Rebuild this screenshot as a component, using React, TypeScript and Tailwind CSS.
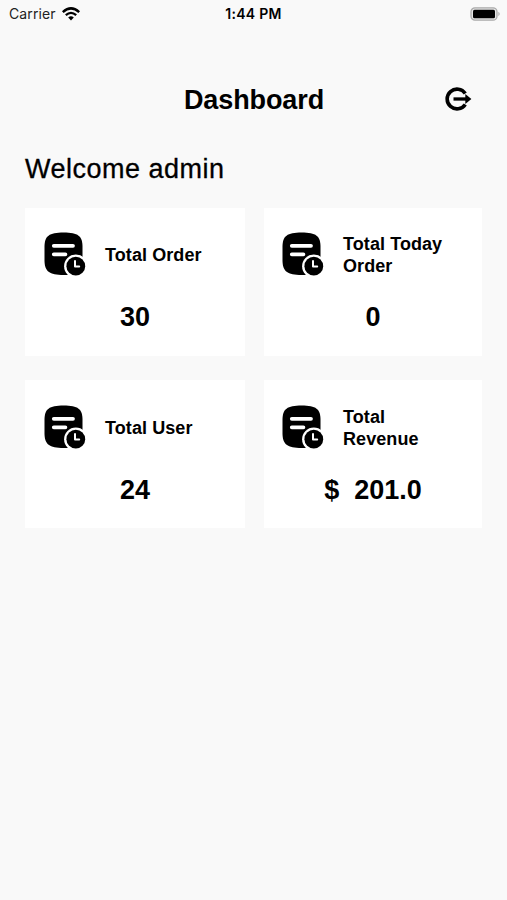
import React from "react";

function OrderIcon() {
  return (
    <svg width="42" height="44" viewBox="0 0 42 44" className="shrink-0">
      <path
        d="M0.5 15C0.5 4 5 0.5 19.6 0.5S38.5 4 38.5 15V28C38.5 39.5 34 43 19.6 43S0.5 39.5 0.5 28Z"
        fill="#000"
      />
      <path d="M9.8 13.8H29M9.8 22.3H21.4" stroke="#fff" strokeWidth="3.8" strokeLinecap="round" />
      <circle cx="31.8" cy="34.2" r="11.7" fill="#fff" />
      <circle cx="31.8" cy="34.2" r="9.4" fill="#000" />
      <path d="M31 29V34.6H35.2" fill="none" stroke="#fff" strokeWidth="2" strokeLinecap="round" strokeLinejoin="round" />
    </svg>
  );
}

function LogoutIcon() {
  return (
    <svg width="28" height="26" viewBox="0 0 28 26" fill="none">
      <path d="M21.3 7.5A9.9 9.9 0 1 0 21.3 18.5" stroke="#000" strokeWidth="3.6" />
      <path d="M9.5 13H23" stroke="#000" strokeWidth="3.3" />
      <path d="M21.3 8L27.4 13L21.3 18Z" fill="#000" />
    </svg>
  );
}

function StatusBar() {
  return (
    <div className="grid h-[27px] grid-cols-3 items-center text-[14px] text-black font-['Inter','Liberation_Sans',sans-serif]">
      <div className="flex items-center gap-[6px] pl-[9px]">
        <span className="tracking-[0.1px] text-[#222]">Carrier</span>
        <svg width="18" height="14" viewBox="0 0 18 14" fill="none" stroke="#000">
          <path d="M0.8 5.1Q9 -2.3 17.2 5.1" strokeWidth="2.5" />
          <path d="M3.8 8.2Q9 3.5 14.2 8.2" strokeWidth="2.3" />
          <path d="M6.2 10.4Q9 7.9 11.8 10.4L9 13.4Z" fill="#000" stroke="none" />
        </svg>
      </div>
      <span className="text-center font-semibold tracking-[0.25px] whitespace-nowrap">1:44 PM</span>
      <div className="flex justify-end pr-[6px]">
        <svg width="31" height="14" viewBox="0 0 31 14">
          <rect x="1" y="0.8" width="26" height="12.4" rx="4" fill="#e6e6e6" stroke="#aaa" strokeWidth="1.3" />
          <rect x="3" y="2.7" width="22" height="8.6" rx="1.5" fill="#000" />
          <path d="M28.4 4.8Q31 7 28.4 9.2Z" fill="#aaa" />
        </svg>
      </div>
    </div>
  );
}

type Stat = { title: string; value: string; inset: string; titleInset: string };

function StatCard({ title, value, inset, titleInset }: Stat) {
  return (
    <section className="h-[148px] bg-white">
      <div className={`flex items-center ${inset}`}>
        <OrderIcon />
        <h3 className={`ml-[19px] w-[110px] text-[18px] leading-[22px] font-bold tracking-[0.08px] ${titleInset}`}>
          {title}
        </h3>
      </div>
      <p className="mt-[25px] text-center text-[27px] leading-8 font-bold whitespace-pre">{value}</p>
    </section>
  );
}

const stats: Stat[] = [
  { title: "Total Order", value: "30", inset: "h-[68px] pt-6 pl-[19px]", titleInset: "pt-[1px]" },
  { title: "Total Today Order", value: "0", inset: "h-[68px] pt-6 pl-[18px]", titleInset: "pt-[1px]" },
  { title: "Total User", value: "24", inset: "h-[69px] pt-[25px] pl-[19px]", titleInset: "pt-[1px]" },
  { title: "Total Revenue", value: "$  201.0", inset: "h-[69px] pt-[25px] pl-[18px]", titleInset: "pt-[1px]" },
];

export default function App() {
  return (
    <div className="min-h-[900px] w-full bg-[#f9f9f9] text-black font-['Liberation_Sans',Arial,sans-serif]">
      <StatusBar />
      <header className="mt-[53px] grid h-10 grid-cols-[1fr_auto_1fr] items-center pr-[35px] pl-[36px]">
        <span />
        <h1 className="text-[27px] leading-8 font-bold tracking-[-0.1px]">Dashboard</h1>
        <button className="mb-[2px] justify-self-end" aria-label="Log out">
          <LogoutIcon />
        </button>
      </header>
      <main className="px-[25px] pt-[33px]">
        <h2 className="text-[27px] leading-8 tracking-[0.5px] [-webkit-text-stroke:0.3px_#000]">Welcome admin</h2>
        <div className="mt-[23px] grid grid-cols-[220px_218px] gap-x-[19px] gap-y-6">
          {stats.map((stat) => (
            <StatCard key={stat.title} {...stat} />
          ))}
        </div>
      </main>
    </div>
  );
}
